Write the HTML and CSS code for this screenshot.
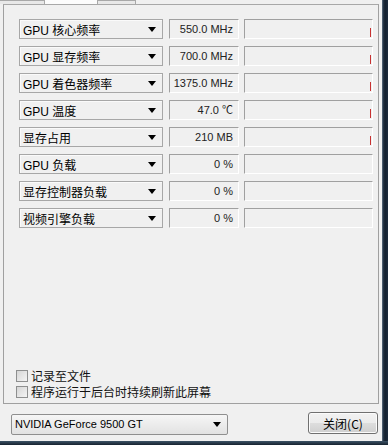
FILE: index.html
```html
<!DOCTYPE html>
<html lang="zh-CN">
<head>
<meta charset="utf-8">
<title>GPU 传感器</title>
<link rel="stylesheet" href="styles.css">
</head>
<body>
<div class="window">
  <div class="main">
    <div class="tabstrip">
      <div class="tab tab-a"></div>
      <div class="tab tab-active"></div>
      <div class="tab tab-b"></div>
      <div class="tab-rest"></div>
    </div>
    <div class="panel">
      <div class="rows">
        <div class="row">
          <div class="combo"><span>GPU 核心频率</span><i class="arrow"></i></div>
          <div class="value">550.0 MHz</div>
          <div class="graph"><b class="tick"></b></div>
        </div>
        <div class="row">
          <div class="combo"><span>GPU 显存频率</span><i class="arrow"></i></div>
          <div class="value">700.0 MHz</div>
          <div class="graph"><b class="tick"></b></div>
        </div>
        <div class="row">
          <div class="combo"><span>GPU 着色器频率</span><i class="arrow"></i></div>
          <div class="value">1375.0 MHz</div>
          <div class="graph"><b class="tick"></b></div>
        </div>
        <div class="row">
          <div class="combo"><span>GPU 温度</span><i class="arrow"></i></div>
          <div class="value">47.0 ℃</div>
          <div class="graph"><b class="tick"></b></div>
        </div>
        <div class="row">
          <div class="combo"><span>显存占用</span><i class="arrow"></i></div>
          <div class="value">210 MB</div>
          <div class="graph"><b class="tick"></b></div>
        </div>
        <div class="row">
          <div class="combo"><span>GPU 负载</span><i class="arrow"></i></div>
          <div class="value">0 %</div>
          <div class="graph"></div>
        </div>
        <div class="row">
          <div class="combo"><span>显存控制器负载</span><i class="arrow"></i></div>
          <div class="value">0 %</div>
          <div class="graph"></div>
        </div>
        <div class="row">
          <div class="combo"><span>视频引擎负载</span><i class="arrow"></i></div>
          <div class="value">0 %</div>
          <div class="graph"></div>
        </div>
      </div>
      <div class="checks">
        <label class="check"><span class="box"></span>记录至文件</label>
        <label class="check"><span class="box"></span>程序运行于后台时持续刷新此屏幕</label>
      </div>
    </div>
    <div class="footer">
      <div class="select"><span>NVIDIA GeForce 9500 GT</span><i class="arrow"></i></div>
      <div class="button">关闭(C)</div>
    </div>
  </div>
  <div class="frame-right"></div>
</div>
<div class="frame-bottom"></div>
</body>
</html>
```
FILE: styles.css
```css
html, body {
  margin: 0;
  padding: 0;
  background: #f0f0f0;
  width: 388px;
  height: 445px;
  overflow: hidden;
  font-family: "Liberation Sans", "Noto Sans CJK SC", sans-serif;
  color: #000;
}

.window {
  display: flex;
  height: 441px;
}

.main {
  flex: 1;
  display: flex;
  flex-direction: column;
}

.frame-right {
  width: 6px;
  background: linear-gradient(to right, #6d7f8f 0, #2a3a4c 1px, #14202e 3px, #1b2a3c 6px);
}

.frame-bottom {
  height: 4px;
  background: linear-gradient(to bottom, #3c5266, #16222f);
}

/* tabs */
.tabstrip {
  display: flex;
  height: 4px;
}
.tab-a {
  width: 45px;
  border-top: 1px solid #a8a8a8;
  border-right: 1px solid #a8a8a8;
  box-sizing: border-box;
  background: #e8e8e8;
}
.tab-active {
  width: 52px;
  background: #fcfcfc;
}
.tab-b {
  width: 39px;
  border-top: 1px solid #a8a8a8;
  border-left: 1px solid #a8a8a8;
  border-right: 1px solid #a8a8a8;
  box-sizing: border-box;
  background: #e8e8e8;
}
.tab-rest {
  flex: 1;
}

/* panel */
.panel {
  margin: 0 3px 0 3px;
  height: 400px;
  box-sizing: border-box;
  border: 1px solid #a0a0a0;
  border-top-color: #a8a8a8;
  padding: 14px 0 4px 15px;
  display: flex;
  flex-direction: column;
  justify-content: space-between;
  background: #f0f0f0;
}

.rows {
  display: flex;
  flex-direction: column;
  gap: 7px;
}

.row {
  display: flex;
  height: 20px;
  align-items: stretch;
}

.combo {
  width: 144px;
  box-sizing: border-box;
  border: 1px solid #a7a7a7;
  box-shadow: inset 1px 1px 0 #fafafa;
  background: #f0f0f0;
  display: flex;
  align-items: center;
  justify-content: space-between;
  padding: 0 4px 0 3px;
  font-size: 12px;
  margin-right: 6px;
}

.arrow {
  width: 0;
  height: 0;
  border-left: 4px solid transparent;
  border-right: 4px solid transparent;
  border-top: 5px solid #000;
  margin-right: 2px;
}

.value {
  width: 70px;
  box-sizing: border-box;
  border-top: 1px solid #a0a0a0;
  border-left: 1px solid #a0a0a0;
  border-bottom: 1px solid #ffffff;
  border-right: 1px solid #ffffff;
  font-size: 11px;
  text-align: right;
  padding-right: 5px;
  line-height: 18px;
  margin-right: 5px;
  color: #222;
}

.graph {
  width: 129px;
  box-sizing: border-box;
  border-top: 1px solid #a0a0a0;
  border-left: 1px solid #a0a0a0;
  border-bottom: 1px solid #ffffff;
  border-right: 1px solid #ffffff;
  display: flex;
  justify-content: flex-end;
  align-items: flex-end;
}

.tick {
  width: 1px;
  height: 9px;
  background: #c83232;
  margin: 0 1px 1px 0;
}

.checks {
  display: flex;
  flex-direction: column;
  gap: 1px;
  margin-left: -3px;
}

.check {
  display: flex;
  align-items: center;
  font-size: 12px;
  height: 15px;
  line-height: 15px;
  font-family: "Noto Sans CJK SC", sans-serif;
  color: #111;
}

.box {
  width: 12px;
  height: 12px;
  box-sizing: border-box;
  border: 1px solid #8e8f8f;
  background: linear-gradient(135deg, #d6d6d6, #f4f4f4);
  margin-right: 3px;
}

/* footer */
.footer {
  flex: 1;
  display: flex;
  align-items: center;
  justify-content: space-between;
  padding: 0 4px 0 11px;
}

.select {
  width: 217px;
  height: 21px;
  box-sizing: border-box;
  border: 1px solid #8f8f8f;
  border-radius: 2px;
  background: linear-gradient(#f6f6f6, #e2e2e2);
  display: flex;
  align-items: center;
  justify-content: space-between;
  padding: 0 4px 0 3px;
  font-size: 11px;
  margin-top: 3px;
}

.button {
  width: 70px;
  height: 22px;
  box-sizing: border-box;
  border: 1px solid #707070;
  border-radius: 3px;
  background: linear-gradient(#f2f2f2 0, #ebebeb 50%, #dddddd 51%, #cfcfcf 100%);
  box-shadow: inset 0 0 0 1px #fbfbfb;
  display: flex;
  align-items: center;
  justify-content: center;
  font-size: 12px;
  font-family: "Noto Sans CJK SC", sans-serif;
  margin-top: 1px;
}
```
